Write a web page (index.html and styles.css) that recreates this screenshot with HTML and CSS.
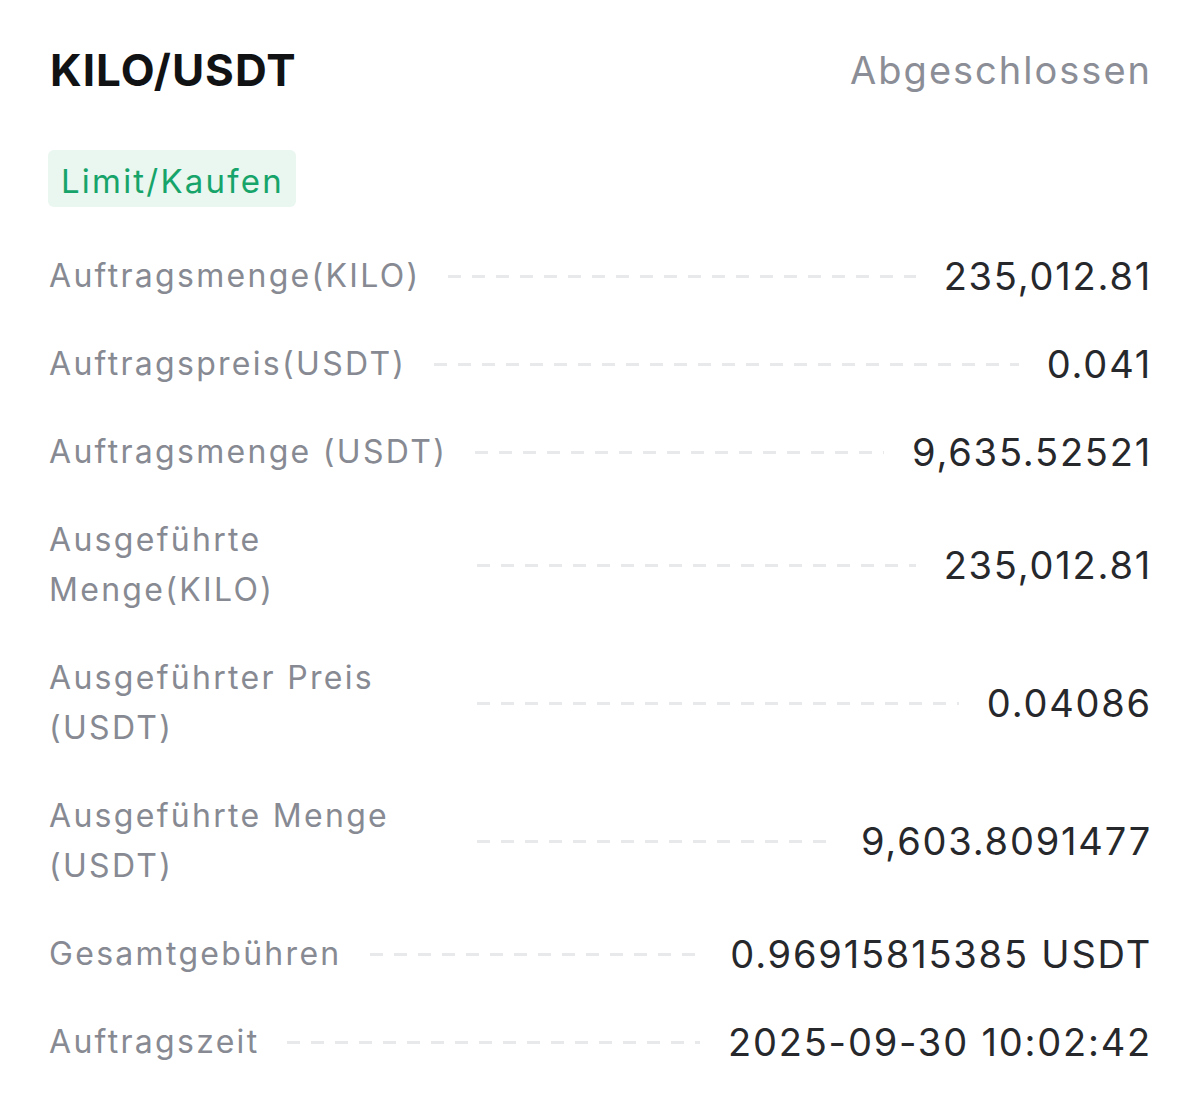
FILE: index.html
```html
<!DOCTYPE html>
<html lang="de">
<head>
<meta charset="utf-8">
<title>KILO/USDT</title>
<link rel="stylesheet" href="styles.css">
</head>
<body>
<div class="card">
  <div class="header">
    <h1 class="pair">KILO/USDT</h1>
    <span class="status">Abgeschlossen</span>
  </div>
  <div class="tag">Limit/Kaufen</div>
  <dl class="rows">
    <div class="row"><dt class="label">Auftragsmenge(KILO)</dt><span class="leader"></span><dd class="value">235,012.81</dd></div>
    <div class="row"><dt class="label">Auftragspreis(USDT)</dt><span class="leader"></span><dd class="value">0.041</dd></div>
    <div class="row"><dt class="label">Auftragsmenge (USDT)</dt><span class="leader"></span><dd class="value">9,635.52521</dd></div>
    <div class="row"><dt class="label">Ausgeführte Menge(KILO)</dt><span class="leader"></span><dd class="value">235,012.81</dd></div>
    <div class="row"><dt class="label">Ausgeführter Preis (USDT)</dt><span class="leader"></span><dd class="value">0.04086</dd></div>
    <div class="row"><dt class="label">Ausgeführte Menge (USDT)</dt><span class="leader"></span><dd class="value">9,603.8091477</dd></div>
    <div class="row"><dt class="label">Gesamtgebühren</dt><span class="leader"></span><dd class="value">0.96915815385 USDT</dd></div>
    <div class="row"><dt class="label">Auftragszeit</dt><span class="leader"></span><dd class="value">2025-09-30 10:02:42</dd></div>
  </dl>
</div>
</body>
</html>
```

FILE: styles.css
```css
html, body {
  margin: 0;
  padding: 0;
  background: #ffffff;
}

body {
  font-family: Inter, "Noto Sans", "DejaVu Sans", sans-serif;
  color: #222428;
}

.card {
  width: 1100px;
  padding: 43px 50px 0 50px;
}

.header {
  display: flex;
  justify-content: space-between;
  align-items: center;
  height: 54px;
}

.pair {
  margin: 0;
  font-size: 44px;
  font-weight: 700;
  line-height: 54px;
  color: #111214;
  letter-spacing: 1px;
}

.status {
  margin-right: -2px;
  font-size: 38px;
  line-height: 54px;
  color: #8b8e96;
  letter-spacing: 2px;
}

.tag {
  display: inline-flex;
  align-items: center;
  margin-top: 53px;
  margin-left: -2px;
  height: 57px;
  padding: 4px 12px 0 13px;
  box-sizing: border-box;
  border-radius: 6px;
  background: #e9f7f0;
  color: #17a46a;
  font-size: 33px;
  letter-spacing: 2.2px;
}

.rows {
  margin: 44px 0 0 0;
  display: flex;
  flex-direction: column;
  gap: 38px;
}

.row {
  display: flex;
  align-items: center;
}

.label {
  flex: 0 0 auto;
  max-width: 400px;
  margin-left: -1px;
  font-size: 32px;
  line-height: 50px;
  color: #878a92;
  letter-spacing: 2.3px;
}

.leader {
  flex: 1 1 0;
  min-width: 40px;
  height: 3px;
  margin: 0 28px;
  background: repeating-linear-gradient(to right, #e8e9eb 0 13px, transparent 13px 24px);
}

.value {
  margin: 0 -2px 0 0;
  flex: 0 0 auto;
  white-space: nowrap;
  font-size: 38px;
  line-height: 50px;
  color: #26282c;
  letter-spacing: 1.8px;
  text-align: right;
}
```
